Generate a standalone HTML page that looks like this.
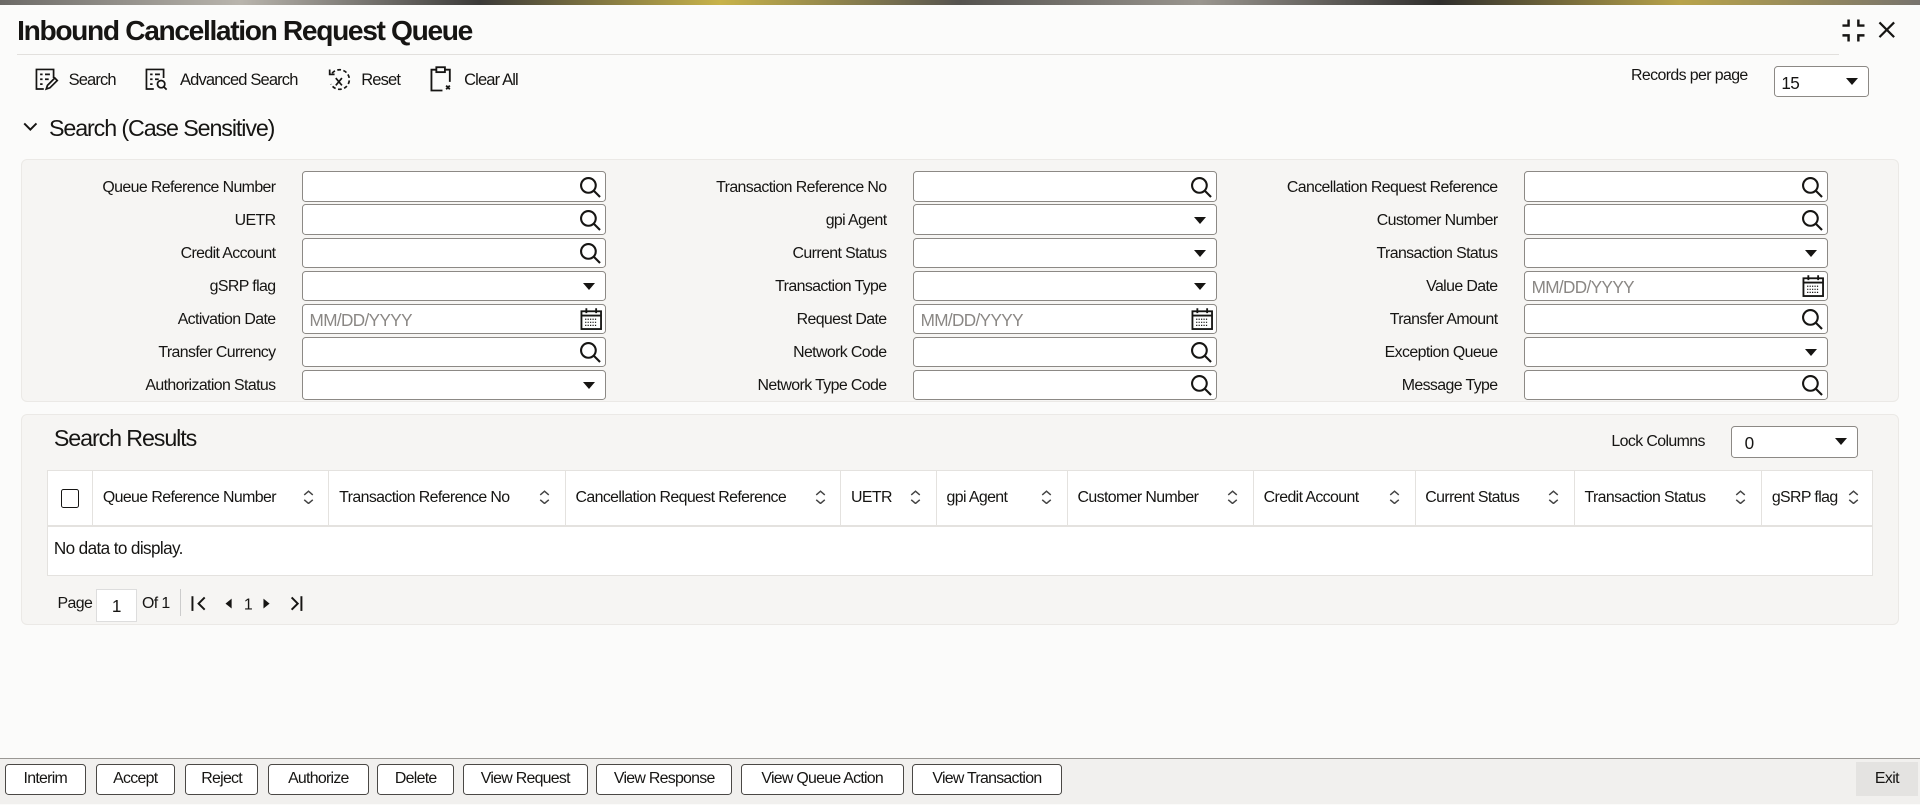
<!DOCTYPE html>
<html><head><meta charset="utf-8"><style>
html,body{margin:0;padding:0;overflow:hidden}
body{width:1920px;height:805px;background:#fbfbfa}
#w{zoom:1.2244898;position:relative;width:1568px;height:657px;font-family:"Liberation Sans Narrow","Liberation Sans",sans-serif;color:#161513;font-size:13px;letter-spacing:-0.5px}
.a{position:absolute}
.top{left:0;top:0;width:1568px;height:4px;background:linear-gradient(90deg,#6c6a66,#b9b5ad,#3b3a38,#c8b34a,#55534f,#9a968f,#2f2e2c,#b8a34a,#77736d)}
.title{left:14px;top:12px;font-size:23px;font-weight:bold;letter-spacing:-1.1px}
.hr{left:14px;top:44px;width:1488px;height:1px;background:#e2e0dd}
.tb{top:57px;font-size:13.5px;letter-spacing:-0.7px}
.panel{background:#f6f5f3;border:1px solid #ebe9e6;border-radius:5px}
.lab{text-align:right;width:220px;font-size:13px;line-height:25px}
.in{height:24px;width:248px;background:#fff;border:1px solid #8c8985;border-radius:3px;box-sizing:border-box}
.ph{position:absolute;left:5px;top:4px;color:#8a8784;font-size:14px}
.ic{position:absolute;right:2px;top:2px}
.dd{position:absolute;right:8px;top:9px;width:0;height:0;border-left:5px solid transparent;border-right:5px solid transparent;border-top:6px solid #161513}
.th{top:384px;height:45px;line-height:45px;font-size:13px;border-right:1px solid #e4e2df;box-sizing:border-box;padding-left:8px;white-space:nowrap}
.btn{top:624px;height:25px;border:1px solid #4a4845;border-radius:3px;box-sizing:border-box;line-height:23px;text-align:center;font-size:13px;background:#fff;letter-spacing:-0.6px}
.srt{display:inline-block;position:absolute;right:12px;top:0;font-size:10px;color:#555}
</style></head><body><div id="w">
<div class="a top"></div>
<div class="a title">Inbound Cancellation Request Queue</div>
<svg class="a" style="left:1503px;top:14px" width="22" height="22" viewBox="0 0 22 22" fill="none" stroke="#161513" stroke-width="2"><path d="M7 2v5H2M15 2v5h5M7 20v-5H2M15 20v-5h5"/></svg>
<svg class="a" style="left:1533px;top:16px" width="16" height="16" viewBox="0 0 16 16" stroke="#161513" stroke-width="1.8"><path d="M2 2L14 14M14 2L2 14"/></svg>
<div class="a hr"></div>

<svg class="a" style="left:28px;top:55px" width="20" height="20" viewBox="0 0 20 20" fill="none" stroke="#161513" stroke-width="1.4"><path d="M8 18H2V2h14v7"/><path d="M5 6h2M9 6h4M5 10h2M9 10h3M5 14h2"/><path d="M10 18l1-3 6-6 2 2-6 6z"/></svg>
<div class="a tb" style="left:56px">Search</div>
<svg class="a" style="left:118px;top:55px" width="20" height="20" viewBox="0 0 20 20" fill="none" stroke="#161513" stroke-width="1.4"><path d="M8 18H2V2h14v7"/><path d="M5 6h2M9 6h4M5 10h2M9 10h3M5 14h2"/><circle cx="14" cy="14" r="3"/><path d="M16 16l2.5 2.5"/></svg>
<div class="a tb" style="left:147px">Advanced Search</div>
<svg class="a" style="left:266px;top:55px" width="22" height="20" viewBox="0 0 22 20" fill="none" stroke="#161513" stroke-width="1.4"><path d="M5 5a8 8 0 1 1-1 9" stroke-dasharray="3 2"/><path d="M3 2v4h4"/><path d="M8 9l5 6M13 9l-5 6"/></svg>
<div class="a tb" style="left:295px">Reset</div>
<svg class="a" style="left:350px;top:54px" width="20" height="22" viewBox="0 0 20 22" fill="none" stroke="#161513" stroke-width="1.5"><path d="M6 3H2v17h9"/><path d="M13 3h4v10"/><rect x="6" y="1" width="7" height="4"/><path d="M14 16l3 3M17 16l-3 3"/></svg>
<div class="a tb" style="left:379px">Clear All</div>

<div class="a" style="left:1332px;top:55px;font-size:13px">Records per page</div>
<div class="a in" style="left:1449px;top:54px;width:77px;height:25px"><span class="ph" style="color:#161513;top:5px">15</span><span class="dd"></span></div>

<svg class="a" style="left:19px;top:99px" width="12" height="10" viewBox="0 0 12 10" fill="none" stroke="#161513" stroke-width="1.6"><path d="M1 2l5 5 5-5"/></svg>
<div class="a" style="left:40px;top:94px;font-size:19px;letter-spacing:-0.9px">Search (Case Sensitive)</div>

<div class="a panel" style="left:17px;top:130px;width:1532px;height:197px"></div>

<div class="a panel" style="left:17px;top:338px;width:1532px;height:171px"></div>
<div class="a" style="left:44px;top:347px;font-size:19px;letter-spacing:-0.9px">Search Results</div>
<div class="a" style="left:1316px;top:354px;font-size:13px">Lock Columns</div>
<div class="a in" style="left:1414px;top:348px;width:103px;height:26px"><span class="ph" style="color:#161513;top:5px;left:10px">0</span><span class="dd"></span></div>

<div class="a" style="left:38px;top:384px;width:1492px;height:86px;background:#fff;border:1px solid #e4e2df;box-sizing:border-box"></div>
<div class="a" style="left:38px;top:429px;width:1492px;height:1px;background:#e4e2df"></div>
<div class="a th" style="left:38px;width:38px"></div>
<div class="a" style="left:50px;top:399px;width:13px;height:14px;border:1.5px solid #161513;border-radius:2px"></div>
<div class="a" style="left:44px;top:439px;font-size:14px">No data to display.</div>

<div class="a" style="left:47px;top:486px;font-size:13px">Page</div>
<div class="a" style="left:78px;top:481px;width:34px;height:27px;border:1px solid #ddd;background:#fff;box-sizing:border-box;text-align:center;line-height:27px;font-size:14px">1</div>
<div class="a" style="left:116px;top:486px;font-size:13px">Of 1</div>
<div class="a" style="left:147px;top:481px;width:1px;height:22px;background:#ccc"></div>
<svg class="a" style="left:155px;top:486px" width="100" height="14" viewBox="0 0 100 14" fill="#161513" stroke="#161513"><path d="M2 1v12" stroke-width="1.6"/><path d="M12 2l-5 5 5 5" fill="none" stroke-width="1.6"/><path d="M34 3l-5 4 5 4z" stroke="none"/><text x="44" y="12" font-size="13" stroke="none" font-family="Liberation Sans,sans-serif">1</text><path d="M60 3l5 4-5 4z" stroke="none"/><path d="M83 2l5 5-5 5" fill="none" stroke-width="1.6"/><path d="M91 1v12" stroke-width="1.6"/></svg>

<div class="a" style="left:0;top:619px;width:1568px;height:1px;background:#9a9894"></div>
<div class="a" style="left:0;top:620px;width:1568px;height:37px;background:#f1f0ee"></div>
<div class="a" style="left:1516px;top:622px;width:50px;height:28px;background:#e4e3e1;line-height:28px;text-align:center">Exit</div>
</div>
<script>
var w=document.getElementById('w');
function add(h){w.insertAdjacentHTML('beforeend',h)}
var sv='<svg class="ic" width="20" height="20" viewBox="0 0 20 20" fill="none" stroke="#161513" stroke-width="1.7"><circle cx="8.5" cy="8.5" r="6"/><path d="M13 13l5 5"/></svg>';
var cal='<svg class="ic" style="top:2px;right:1px" width="20" height="20" viewBox="0 0 20 20" fill="none" stroke="#161513" stroke-width="1.5"><rect x="2" y="3.5" width="16" height="14.5"/><path d="M2 7h16M6 1v4M14 1v4"/><path d="M5 10h10M5 12.5h10M5 15h10" stroke-width="1" stroke-dasharray="1 1"/></svg>';
var dd='<span class="dd"></span>';
var cols=[[225,247],[724,746],[1223,1245]];
var rows=[
[['Queue Reference Number','s'],['Transaction Reference No','s'],['Cancellation Request Reference','s']],
[['UETR','s'],['gpi Agent','d'],['Customer Number','s']],
[['Credit Account','s'],['Current Status','d'],['Transaction Status','d']],
[['gSRP flag','d'],['Transaction Type','d'],['Value Date','c']],
[['Activation Date','c'],['Request Date','c'],['Transfer Amount','s']],
[['Transfer Currency','s'],['Network Code','s'],['Exception Queue','d']],
[['Authorization Status','d'],['Network Type Code','s'],['Message Type','s']]];
rows.forEach(function(r,i){var y=140+i*27;r.forEach(function(c,j){
add('<div class="a lab" style="left:'+(cols[j][0]-220)+'px;top:'+(y+1)+'px">'+c[0]+'</div>');
var inner=c[1]=='s'?sv:c[1]=='d'?dd:'<span class="ph">MM/DD/YYYY</span>'+cal;
add('<div class="a in" style="left:'+cols[j][1]+'px;top:'+y+'px;height:25px">'+inner+'</div>');});});
var hs=[[76,269,'Queue Reference Number'],[269,462,'Transaction Reference No'],[462,687,'Cancellation Request Reference'],[687,765,'UETR'],[765,872,'gpi Agent'],[872,1024,'Customer Number'],[1024,1156,'Credit Account'],[1156,1286,'Current Status'],[1286,1439,'Transaction Status'],[1439,1530,'gSRP flag']];
hs.forEach(function(h){add('<div class="a th" style="left:'+h[0]+'px;width:'+(h[1]-h[0])+'px;'+(h[1]==1530?'border-right:none':'')+'">'+h[2]+'<svg class="srt" style="top:16px" width="9" height="12" viewBox="0 0 9 12" fill="none" stroke="#444" stroke-width="1.2"><path d="M1 4l3.5-3 3.5 3M1 8l3.5 3 3.5-3"/></svg></div>')});
var bs=[[4,70,'Interim'],[78,143,'Accept'],[151,211,'Reject'],[219,301,'Authorize'],[308,371,'Delete'],[378,480,'View Request'],[487,598,'View Response'],[605,738,'View Queue Action'],[745,867,'View Transaction']];
bs.forEach(function(b){add('<div class="a btn" style="left:'+b[0]+'px;width:'+(b[1]-b[0])+'px">'+b[2]+'</div>')});
</script>
</body></html>
